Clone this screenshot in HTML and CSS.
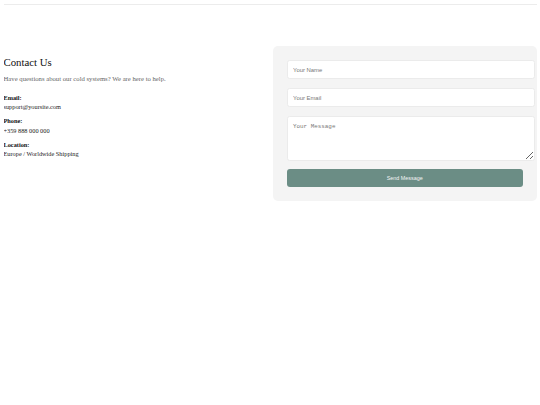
FILE: index.html
```html
<!DOCTYPE html>
<html lang="en">
<head>
    <meta charset="UTF-8">
    <meta name="viewport" content="width=device-width, initial-scale=1.0">
    <title>Contact Us</title>
    <link rel="stylesheet" href="styles.css">
</head>
<body>

<div class="topbar"></div>

<section class="contact">
    <div class="contact-info">
        <h2>Contact Us</h2>
        <p class="lead">Have questions about our cold systems? We are here to help.</p>

        <div class="info-item">
            <strong>Email:</strong>
            <span>support@yoursite.com</span>
        </div>
        <div class="info-item">
            <strong>Phone:</strong>
            <span>+359 888 000 000</span>
        </div>
        <div class="info-item">
            <strong>Location:</strong>
            <span>Europe / Worldwide Shipping</span>
        </div>
    </div>

    <form class="contact-form" onsubmit="return false;">
        <input type="text" placeholder="Your Name">
        <input type="email" placeholder="Your Email">
        <textarea placeholder="Your Message"></textarea>
        <button type="submit">Send Message</button>
    </form>
</section>

</body>
</html>
```

FILE: styles.css
```css
body {
    font-family: "Liberation Serif", "Times New Roman", serif;
    background-color: #fff;
    color: #111;
    margin: 3.5px;
}
.topbar {
    height: 1px;
    background-color: #ececec;
}
.contact {
    display: grid;
    grid-template-columns: 1fr 1fr;
    gap: 6px;
    margin-top: 41.5px;
    align-items: start;
}
.contact-info h2 {
    font-size: 10.8px;
    font-weight: normal;
    margin: 9.5px 0 7px;
}
.contact-info .lead {
    font-size: 6.7px;
    color: #666;
    margin: 0 0 11px;
}
.info-item {
    font-size: 6.3px;
    line-height: 9.5px;
    margin-bottom: 4.6px;
    color: #222;
}
.info-item strong,
.info-item span {
    display: block;
}
.info-item strong {
    color: #111;
}
.contact-form {
    background-color: #f4f4f4;
    border-radius: 5px;
    padding: 14px;
    display: flex;
    flex-direction: column;
}
.contact-form input,
.contact-form textarea {
    width: 100%;
    padding: 5.5px 5px;
    margin: 0 0 9px;
    border: 1px solid #ebebeb;
    border-radius: 2.6px;
    background-color: #fff;
    font-family: "Liberation Sans", Arial, sans-serif;
    font-size: 5.9px;
    color: #333;
}
.contact-form textarea {
    font-family: "Liberation Mono", "Courier New", monospace;
    height: 32px;
    margin-bottom: 8px;
}
.contact-form ::placeholder {
    color: #777;
}
.contact-form button {
    width: 100%;
    height: 18px;
    border: none;
    border-radius: 3px;
    background-color: #6b8d85;
    color: #f4f4f4;
    font-family: "Liberation Sans", Arial, sans-serif;
    font-size: 5.4px;
    cursor: pointer;
}
```
